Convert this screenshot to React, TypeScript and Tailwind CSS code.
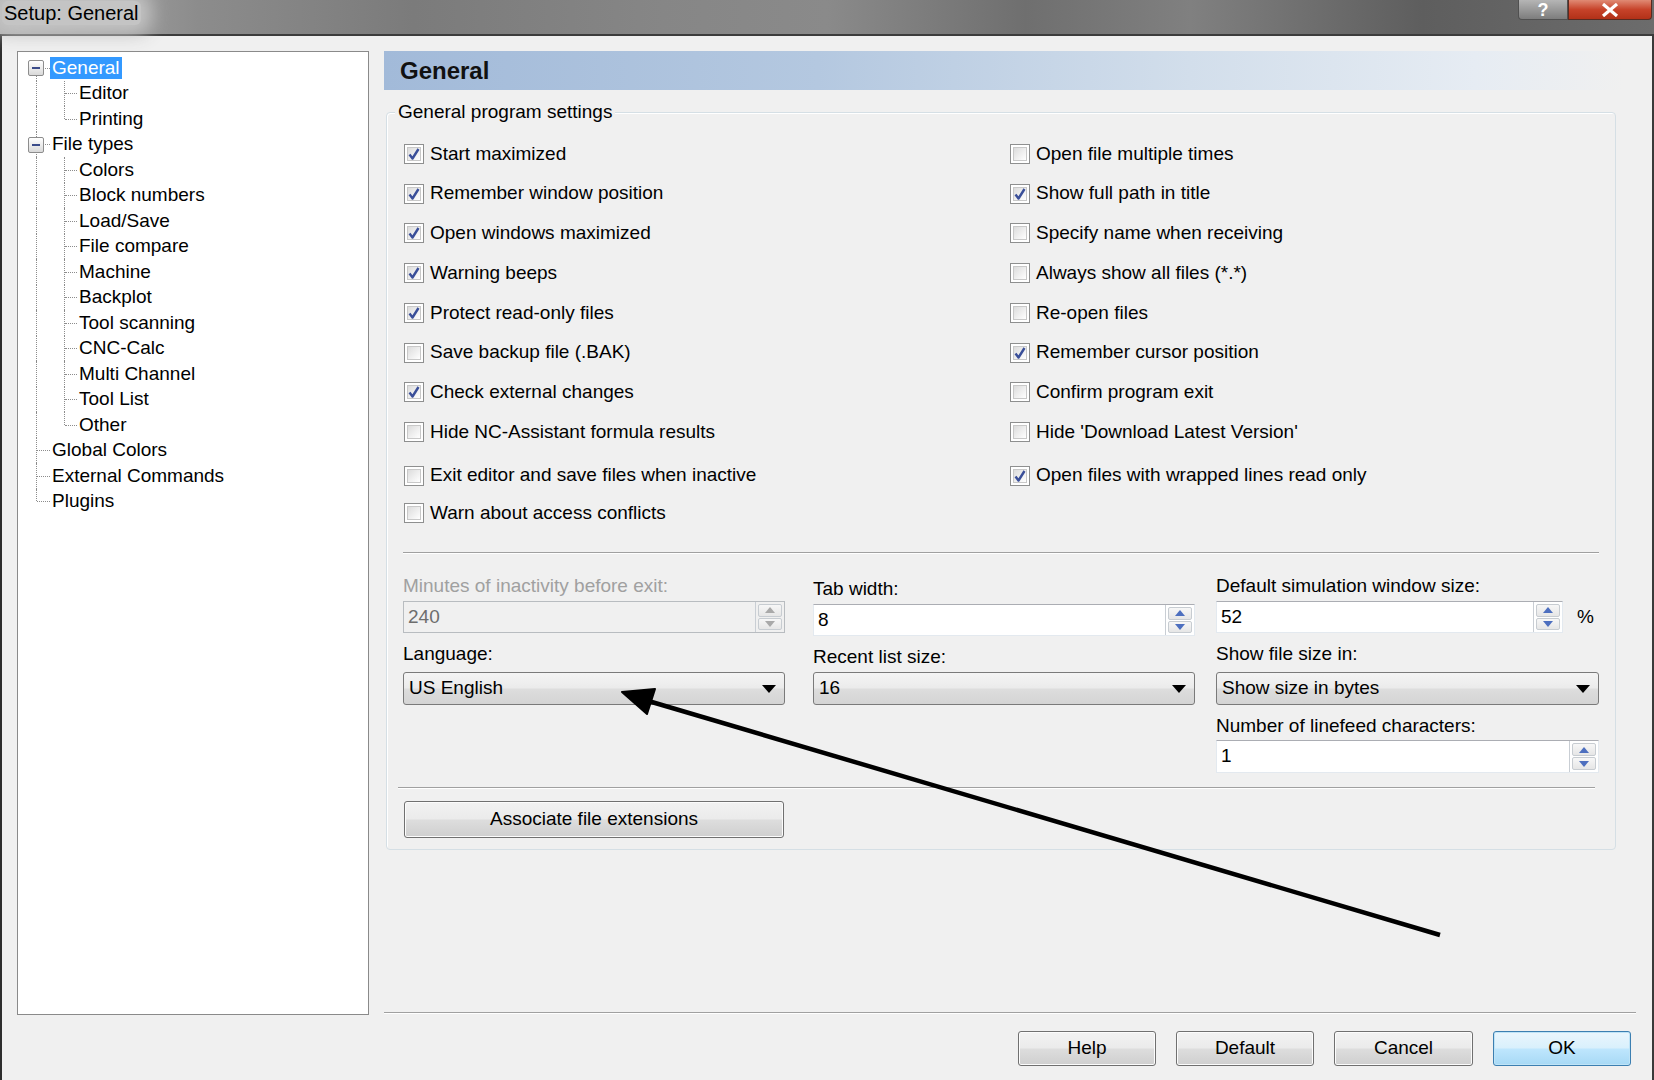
import type { ReactNode } from 'react'

const FONT = { fontFamily: '"Liberation Sans", Arial, sans-serif' }

type TreeRow = {
  label: string
  level: 0 | 1
  expander?: boolean
  root: 'full' | 'top' | 'bottom'
  child?: 'full' | 'top'
  selected?: boolean
}

const TREE: TreeRow[] = [
  { label: 'General', level: 0, expander: true, root: 'bottom', selected: true },
  { label: 'Editor', level: 1, root: 'full', child: 'full' },
  { label: 'Printing', level: 1, root: 'full', child: 'top' },
  { label: 'File types', level: 0, expander: true, root: 'full' },
  { label: 'Colors', level: 1, root: 'full', child: 'full' },
  { label: 'Block numbers', level: 1, root: 'full', child: 'full' },
  { label: 'Load/Save', level: 1, root: 'full', child: 'full' },
  { label: 'File compare', level: 1, root: 'full', child: 'full' },
  { label: 'Machine', level: 1, root: 'full', child: 'full' },
  { label: 'Backplot', level: 1, root: 'full', child: 'full' },
  { label: 'Tool scanning', level: 1, root: 'full', child: 'full' },
  { label: 'CNC-Calc', level: 1, root: 'full', child: 'full' },
  { label: 'Multi Channel', level: 1, root: 'full', child: 'full' },
  { label: 'Tool List', level: 1, root: 'full', child: 'full' },
  { label: 'Other', level: 1, root: 'full', child: 'top' },
  { label: 'Global Colors', level: 0, root: 'full' },
  { label: 'External Commands', level: 0, root: 'full' },
  { label: 'Plugins', level: 0, root: 'top' },
]

// [left label, checked, right label, checked, row height]
const OPTIONS: [string, boolean, string | null, boolean, number][] = [
  ['Start maximized', true, 'Open file multiple times', false, 39.75],
  ['Remember window position', true, 'Show full path in title', true, 39.75],
  ['Open windows maximized', true, 'Specify name when receiving', false, 39.75],
  ['Warning beeps', true, 'Always show all files (*.*)', false, 39.75],
  ['Protect read-only files', true, 'Re-open files', false, 39.75],
  ['Save backup file (.BAK)', false, 'Remember cursor position', true, 39.75],
  ['Check external changes', true, 'Confirm program exit', false, 39.75],
  ['Hide NC-Assistant formula results', false, "Hide 'Download Latest Version'", false, 39.75],
  ['Exit editor and save files when inactive', false, 'Open files with wrapped lines read only', true, 47],
  ['Warn about access conflicts', false, null, false, 28],
]

function TreeItem({ row }: { row: TreeRow }) {
  const textLeft = row.level === 0 ? 'ml-[32px]' : 'ml-[59px]'
  return (
    <div className="relative h-[25.5px] flex items-center">
      {/* root vertical line */}
      {row.root === 'full' && <div className="absolute left-[18px] top-0 bottom-0 border-l border-dotted border-[#8c8c8c]" />}
      {row.root === 'top' && <div className="absolute left-[18px] top-0 h-1/2 border-l border-dotted border-[#8c8c8c]" />}
      {row.root === 'bottom' && <div className="absolute left-[18px] top-1/2 bottom-0 border-l border-dotted border-[#8c8c8c]" />}
      {/* child vertical line */}
      {row.child === 'full' && <div className="absolute left-[46px] top-0 bottom-0 border-l border-dotted border-[#8c8c8c]" />}
      {row.child === 'top' && <div className="absolute left-[46px] top-0 h-1/2 border-l border-dotted border-[#8c8c8c]" />}
      {/* horizontal connector */}
      {row.level === 0 ? (
        <div className="absolute left-[19px] top-1/2 w-[13px] border-t border-dotted border-[#8c8c8c]" />
      ) : (
        <div className="absolute left-[47px] top-1/2 w-[12px] border-t border-dotted border-[#8c8c8c]" />
      )}
      {row.expander && (
        <div className="absolute left-[10px] top-[5px] w-[16px] h-[16px] rounded-[2px] border border-[#8d8d8d] bg-[linear-gradient(180deg,#ffffff,#d9d9d9)] flex items-center justify-center">
          <div className="w-[8px] h-[2px] bg-[#3b4c8a]" />
        </div>
      )}
      <span
        className={`${textLeft} relative leading-[22px] h-[22px] px-[2px] text-[19px] ${
          row.selected ? 'bg-[#3399ff] text-white' : 'text-black'
        }`}
      >
        {row.label}
      </span>
    </div>
  )
}

function CheckBox({ checked, label }: { checked: boolean; label: string }) {
  return (
    <div className="flex items-center">
      <div className="w-[20px] h-[20px] border border-[#8e8f8f] bg-white p-[2px]">
        <div className="w-full h-full border border-[#c8c8c8] bg-[linear-gradient(135deg,#dcdcdc,#ffffff)] flex items-center justify-center">
          {checked && (
            <svg width="12" height="12" viewBox="0 0 12 12">
              <path d="M1.5 6.5 L4.5 10.5 L10.5 1" fill="none" stroke="#3a4f99" strokeWidth="2.4" strokeLinejoin="round" />
            </svg>
          )}
        </div>
      </div>
      <span className="ml-[6px] text-[19px] text-black">{label}</span>
    </div>
  )
}

function Spinner({ disabled }: { disabled?: boolean }) {
  const color = disabled ? '#a9a9a9' : '#4d6fbf'
  return (
    <div className="w-[29px] h-full flex flex-col border-l border-[#c9ced4] p-[2px] gap-[1px]">
      <div className="flex-1 border border-[#c7ccd1] rounded-[2px] bg-[linear-gradient(180deg,#f7f7f7,#e6e6e6)] flex items-center justify-center">
        <svg width="10" height="6" viewBox="0 0 10 6">
          <path d="M0 6 L5 0 L10 6 Z" fill={color} />
        </svg>
      </div>
      <div className="flex-1 border border-[#c7ccd1] rounded-[2px] bg-[linear-gradient(180deg,#f7f7f7,#e6e6e6)] flex items-center justify-center">
        <svg width="10" height="6" viewBox="0 0 10 6">
          <path d="M0 0 L10 0 L5 6 Z" fill={color} />
        </svg>
      </div>
    </div>
  )
}

function SpinInput({ value, disabled, className }: { value: string; disabled?: boolean; className: string }) {
  return (
    <div
      className={`${className} flex border ${
        disabled ? 'bg-[#f0f0f0] border-[#b8bcc0] text-[#6d6d6d]' : 'bg-white border-[#e3e9ef] border-t-[#abadb3] text-black'
      }`}
    >
      <span className="flex-1 pl-[4px] text-[19px] leading-[30px]">{value}</span>
      <Spinner disabled={disabled} />
    </div>
  )
}

function Select({ value, className }: { value: string; className: string }) {
  return (
    <div
      className={`${className} flex items-center border border-[#7a7a7a] rounded-[3px] bg-[linear-gradient(180deg,#f4f4f4_0%,#ebebeb_48%,#dddddd_52%,#d4d4d4_100%)]`}
    >
      <span className="flex-1 pl-[5px] text-[19px] text-black">{value}</span>
      <svg width="14" height="8" viewBox="0 0 14 8" className="mr-[8px]">
        <path d="M0 0 L14 0 L7 8 Z" fill="#000" />
      </svg>
    </div>
  )
}

function Label({ children, className = '' }: { children: ReactNode; className?: string }) {
  return <div className={`text-[19px] leading-[22px] ${className}`}>{children}</div>
}

function Button({ children, className, primary }: { children: ReactNode; className: string; primary?: boolean }) {
  return (
    <div
      className={`${className} flex items-center justify-center rounded-[3px] border text-[19px] text-black ${
        primary
          ? 'border-[#3c7fb1] bg-[linear-gradient(180deg,#eaf6fd_0%,#d9f0fc_48%,#bee6fd_52%,#a7d9f5_100%)] shadow-[inset_0_0_0_1px_#bfe4f7]'
          : 'border-[#707070] bg-[linear-gradient(180deg,#f2f2f2_0%,#ebebeb_48%,#dddddd_52%,#cfcfcf_100%)] shadow-[inset_0_0_0_1px_#fcfcfc]'
      }`}
    >
      {children}
    </div>
  )
}

export default function App() {
  return (
    <div className="relative w-[1654px] h-[1080px] overflow-hidden bg-[#f0f0f0] flex flex-col" style={FONT}>
      {/* Title bar */}
      <div className="h-[34px] shrink-0 relative flex items-start bg-[linear-gradient(90deg,#b0b0b0_0%,#8c8c8c_12%,#7b7b7b_25%,#868686_40%,#8a8a8a_50%,#6f6f6f_62%,#808080_72%,#5e5e5e_86%,#6c6c6c_100%)]">
        <span className="ml-[2px] mt-[1px] px-[2px] text-[20px] leading-[24px] text-black bg-[#c4c4c4] shadow-[0_0_18px_10px_#c4c4c4] rounded-[6px]">
          Setup: General
        </span>
        <div className="ml-auto mr-[2px] flex h-[20px]">
          <div className="w-[50px] h-full border border-[#505050] border-t-0 rounded-bl-[4px] bg-[linear-gradient(180deg,#b5b5b5,#7d7d7d)] flex items-center justify-center text-white text-[18px] font-bold leading-none">
            ?
          </div>
          <div className="w-[84px] h-full border border-[#5a2a20] border-t-0 rounded-br-[4px] bg-[linear-gradient(180deg,#e08a74,#c7432a_50%,#b23118)] flex items-center justify-center">
            <svg width="20" height="14" viewBox="0 0 20 14">
              <path d="M3 1 L17 13 M17 1 L3 13" stroke="#ffffff" strokeWidth="3.2" />
            </svg>
          </div>
        </div>
      </div>

      {/* Window body */}
      <div className="flex-1 flex border-t-2 border-t-[#3c3c3c] border-l-2 border-l-[#2e2e2e] border-r-2 border-r-[#3a3a3a]">
        {/* Tree */}
        <div className="ml-[15px] mt-[15px] w-[352px] h-[964px] border border-[#8a8a8a] bg-white pt-[3px]">
          {TREE.map(r => (
            <TreeItem key={r.label} row={r} />
          ))}
        </div>

        {/* Right page */}
        <div className="ml-[15px] mt-[15px] w-[1252px] flex flex-col">
          <div className="w-[1240px] h-[39px] shrink-0 flex items-center pl-[16px] bg-[linear-gradient(90deg,#a2bad9_0%,#b4c8e0_35%,#d2deeb_65%,#e6ecf3_88%,#f0f0f0_100%)]">
            <span className="text-[24px] font-bold text-[#111]">General</span>
          </div>

          {/* Group box */}
          <div className="relative ml-[2px] mt-[22px] w-[1230px] h-[738px] border border-[#d5dfe5] rounded-[4px] shadow-[inset_1px_1px_0_#ffffff]">
            <span className="absolute -top-[12px] left-[8px] px-[3px] bg-[#f0f0f0] text-[19px] leading-[22px] text-black">
              General program settings
            </span>

            <div className="pl-[17px] pt-[21px]">
              {OPTIONS.map(([l, lc, r, rc, h]) => (
                <div key={l} className="flex items-center" style={{ height: h }}>
                  <div className="w-[606px]">
                    <CheckBox checked={lc} label={l} />
                  </div>
                  {r && <CheckBox checked={rc} label={r} />}
                </div>
              ))}
            </div>

            <div className="ml-[16px] mt-[25px] w-[1196px] border-t border-[#a0a0a0] shadow-[0_1px_0_#ffffff]" />

            <div className="flex ml-[16px] mt-[22px] text-black">
              <div className="w-[382px] flex flex-col">
                <Label className="text-[#a0a0a0]">Minutes of inactivity before exit:</Label>
                <SpinInput value="240" disabled className="mt-[4px] h-[32px]" />
                <Label className="mt-[10px]">Language:</Label>
                <Select value="US English" className="mt-[7px] h-[33px]" />
              </div>
              <div className="w-[382px] ml-[28px] flex flex-col pt-[3px]">
                <Label>Tab width:</Label>
                <SpinInput value="8" className="mt-[4px] h-[32px]" />
                <Label className="mt-[10px]">Recent list size:</Label>
                <Select value="16" className="mt-[4px] h-[33px]" />
              </div>
              <div className="w-[383px] ml-[21px] flex flex-col">
                <Label>Default simulation window size:</Label>
                <div className="mt-[4px] flex items-center">
                  <SpinInput value="52" className="w-[347px] h-[32px]" />
                  <span className="ml-[14px] text-[19px]">%</span>
                </div>
                <Label className="mt-[10px]">Show file size in:</Label>
                <Select value="Show size in bytes" className="mt-[7px] h-[33px]" />
                <Label className="mt-[10px]">Number of linefeed characters:</Label>
                <SpinInput value="1" className="mt-[3px] h-[33px]" />
              </div>
            </div>

            <div className="ml-[11px] mt-[14px] w-[1197px] border-t border-[#a0a0a0] shadow-[0_1px_0_#ffffff]" />

            <Button className="ml-[17px] mt-[13px] w-[380px] h-[37px]">Associate file extensions</Button>
          </div>

          <div className="mt-[162px] w-[1252px] border-t border-[#a0a0a0] shadow-[0_1px_0_#ffffff]" />

          <div className="mt-[18px] flex justify-end gap-[20px] pr-[5px]">
            <Button className="w-[138px] h-[35px]">Help</Button>
            <Button className="w-[138px] h-[35px]">Default</Button>
            <Button className="w-[139px] h-[35px]">Cancel</Button>
            <Button className="w-[138px] h-[35px]" primary>
              OK
            </Button>
          </div>
        </div>
      </div>

      {/* Annotation arrow drawn over the dialog */}
      <svg className="absolute inset-0 pointer-events-none" width="1654" height="1080" viewBox="0 0 1654 1080">
        <line x1="1440" y1="935" x2="645" y2="700" stroke="#000" strokeWidth="4.5" />
        <path d="M622 692 L647 714 L655 689 Z" fill="#000" stroke="#000" strokeWidth="2" strokeLinejoin="round" />
      </svg>
    </div>
  )
}
